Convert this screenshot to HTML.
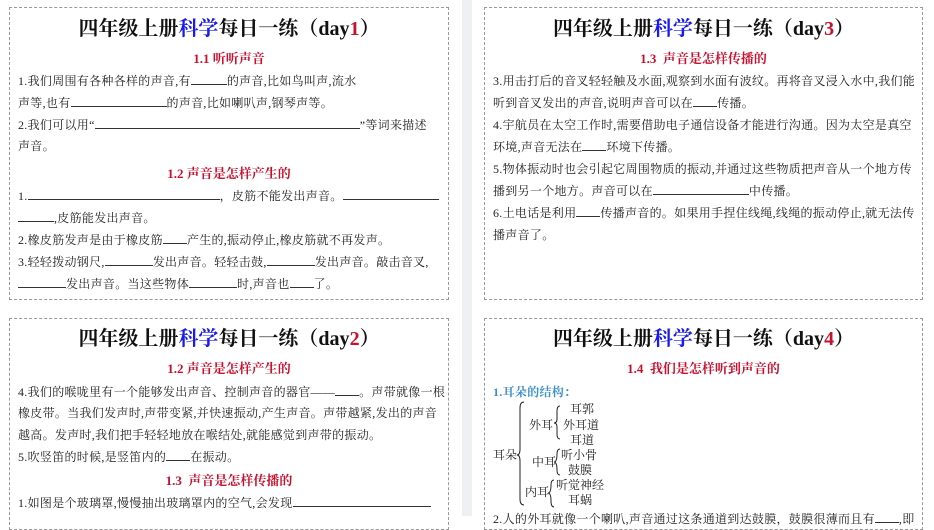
<!DOCTYPE html>
<html><head><meta charset="utf-8"><style>
body{margin:0;width:934px;height:516px;overflow:hidden;background:#fff;position:relative;font-family:"Liberation Serif","Noto Serif CJK SC",serif;}
.strip{position:absolute;left:462px;top:0;width:10px;height:516px;background:#eef0f4;}
.p{position:absolute;border:1px dashed #999;}
.t{position:absolute;left:0;right:0;text-align:center;font-family:"Liberation Serif","Noto Serif CJK SC",serif;font-weight:bold;font-size:20px;color:#111;line-height:24px;}
.h{position:absolute;left:0;right:0;text-align:center;font-family:"Liberation Serif","Noto Serif CJK SC",serif;font-weight:bold;font-size:13px;color:#c8102e;line-height:18px;}
.l{position:absolute;white-space:nowrap;font-size:12px;color:#222;line-height:16px;letter-spacing:0.3px;}
.b{color:#1a1aee}.r{color:#c8102e}
.u{display:inline-block;border-bottom:1px solid #333;height:11px;vertical-align:baseline;}
.s{position:absolute;font-size:12px;color:#222;white-space:nowrap;line-height:14px;}
</style></head><body>
<div class="strip"></div>

<div class="p" style="left:9px;top:7px;width:438px;height:291px;">
<div class="t" style="top:9px;">四年级上册<span class="b">科学</span>每日一练（day<span class="r">1</span>）</div>
<div class="h" style="top:42px;">1.1 听听声音</div>
<div class="l" style="left:8px;top:65px;">1.我们周围有各种各样的声音,有<span class="u" style="width:36px"></span>的声音,比如鸟叫声,流水</div>
<div class="l" style="left:8px;top:87px;">声等,也有<span class="u" style="width:96px"></span>的声音,比如喇叭声,钢琴声等。</div>
<div class="l" style="left:8px;top:109px;">2.我们可以用“<span class="u" style="width:265px"></span>”等词来描述</div>
<div class="l" style="left:8px;top:130px;">声音。</div>
<div class="h" style="top:157px;">1.2 声音是怎样产生的</div>
<div class="l" style="left:8px;top:180px;">1.<span class="u" style="width:192px"></span>，皮筋不能发出声音。<span class="u" style="width:96px"></span></div>
<div class="l" style="left:8px;top:202px;"><span class="u" style="width:36px"></span>,皮筋能发出声音。</div>
<div class="l" style="left:8px;top:224px;">2.橡皮筋发声是由于橡皮筋<span class="u" style="width:24px"></span>产生的,振动停止,橡皮筋就不再发声。</div>
<div class="l" style="left:8px;top:246px;">3.轻轻拨动钢尺,<span class="u" style="width:48px"></span>发出声音。轻轻击鼓,<span class="u" style="width:48px"></span>发出声音。敲击音叉,</div>
<div class="l" style="left:8px;top:268px;"><span class="u" style="width:48px"></span>发出声音。当这些物体<span class="u" style="width:48px"></span>时,声音也<span class="u" style="width:24px"></span>了。</div>
</div>

<div class="p" style="left:484px;top:7px;width:437px;height:291px;">
<div class="t" style="top:9px;">四年级上册<span class="b">科学</span>每日一练（day<span class="r">3</span>）</div>
<div class="h" style="top:42px;">1.3&nbsp; 声音是怎样传播的</div>
<div class="l" style="left:8px;top:65px;">3.用击打后的音叉轻轻触及水面,观察到水面有波纹。再将音叉浸入水中,我们能</div>
<div class="l" style="left:8px;top:87px;">听到音叉发出的声音,说明声音可以在<span class="u" style="width:24px"></span>传播。</div>
<div class="l" style="left:8px;top:109px;">4.宇航员在太空工作时,需要借助电子通信设备才能进行沟通。因为太空是真空</div>
<div class="l" style="left:8px;top:131px;">环境,声音无法在<span class="u" style="width:24px"></span>环境下传播。</div>
<div class="l" style="left:8px;top:153px;">5.物体振动时也会引起它周围物质的振动,并通过这些物质把声音从一个地方传</div>
<div class="l" style="left:8px;top:175px;">播到另一个地方。声音可以在<span class="u" style="width:96px"></span>中传播。</div>
<div class="l" style="left:8px;top:197px;">6.土电话是利用<span class="u" style="width:24px"></span>传播声音的。如果用手捏住线绳,线绳的振动停止,就无法传</div>
<div class="l" style="left:8px;top:219px;">播声音了。</div>
</div>

<div class="p" style="left:9px;top:318px;width:438px;height:210px;">
<div class="t" style="top:8px;">四年级上册<span class="b">科学</span>每日一练（day<span class="r">2</span>）</div>
<div class="h" style="top:41px;">1.2 声音是怎样产生的</div>
<div class="l" style="left:8px;top:65px;">4.我们的喉咙里有一个能够发出声音、控制声音的器官——<span class="u" style="width:24px"></span>。声带就像一根</div>
<div class="l" style="left:8px;top:86px;">橡皮带。当我们发声时,声带变紧,并快速振动,产生声音。声带越紧,发出的声音</div>
<div class="l" style="left:8px;top:108px;">越高。发声时,我们把手轻轻地放在喉结处,就能感觉到声带的振动。</div>
<div class="l" style="left:8px;top:130px;">5.吹竖笛的时候,是竖笛内的<span class="u" style="width:24px"></span>在振动。</div>
<div class="h" style="top:153px;">1.3&nbsp; 声音是怎样传播的</div>
<div class="l" style="left:8px;top:176px;">1.如图是个玻璃罩,慢慢抽出玻璃罩内的空气,会发现<span class="u" style="width:138px"></span></div>
</div>

<div class="p" style="left:484px;top:318px;width:437px;height:210px;">
<div class="t" style="top:8px;">四年级上册<span class="b">科学</span>每日一练（day<span class="r">4</span>）</div>
<div class="h" style="top:41px;">1.4&nbsp; 我们是怎样听到声音的</div>
<div class="l" style="left:8px;top:65px;color:#3a8fd0;font-weight:bold;">1.耳朵的结构：</div>
<svg style="position:absolute;left:0;top:0" width="437" height="210" fill="none" stroke="#222" stroke-width="1">
<path d="M39 83 Q35 83 35 89 L35 130 Q35 136 32 136 Q35 136 35 142 L35 180 Q35 186 39 186"/>
<path d="M75 87 Q72 87 72 92 L72 100 Q72 104 69 104 Q72 104 72 108 L72 115 Q72 120 75 120"/>
<path d="M75 130 Q72 130 72 135 Q72 143 69 143 Q72 143 72 151 Q72 156 75 156"/>
<path d="M69 161 Q66 161 66 166 Q66 174 63 174 Q66 174 66 182 Q66 188 69 188"/>
</svg>
<div class="s" style="left:8px;top:129px;">耳朵</div>
<div class="s" style="left:44px;top:99px;">外耳</div>
<div class="s" style="left:85px;top:83px;">耳郭</div>
<div class="s" style="left:78px;top:99px;">外耳道</div>
<div class="s" style="left:85px;top:114px;">耳道</div>
<div class="s" style="left:47px;top:136px;">中耳</div>
<div class="s" style="left:76px;top:129px;">听小骨</div>
<div class="s" style="left:83px;top:144px;">鼓膜</div>
<div class="s" style="left:40px;top:166px;">内耳</div>
<div class="s" style="left:71px;top:159px;">听觉神经</div>
<div class="s" style="left:83px;top:174px;">耳蜗</div>
<div class="l" style="left:8px;top:192px;">2.人的外耳就像一个喇叭,声音通过这条通道到达鼓膜，鼓膜很薄而且有<span class="u" style="width:24px"></span>,即</div>
</div>
</body></html>
